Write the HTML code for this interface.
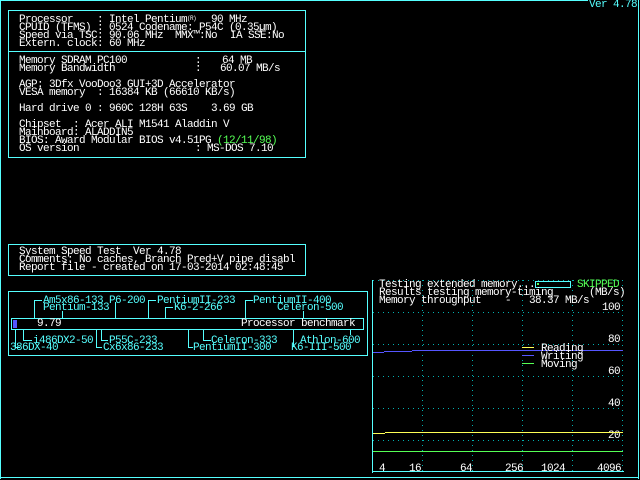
<!DOCTYPE html>
<html><head><meta charset="utf-8"><style>
html,body{margin:0;padding:0;background:#000;}
body{width:640px;height:480px;position:relative;overflow:hidden;font-family:"Liberation Mono",monospace;font-size:11px;letter-spacing:-0.6px;line-height:8px;color:#fff;}
.t{position:absolute;white-space:pre;margin-top:1px;}
.c{color:#55ffff}.g{color:#55ff55}
.b{position:absolute;border:1px solid #55ffff;}
.l{position:absolute;background:#55ffff;}
.hd{position:absolute;height:1px;background:repeating-linear-gradient(90deg,#00b0b0 0 1px,transparent 1px 5px);}
.vd{position:absolute;width:1px;background:repeating-linear-gradient(180deg,#00b0b0 0 1px,transparent 1px 5px);}
</style></head><body>
<div class="l" style="left:0;top:0;width:588px;height:1px"></div>
<div class="l" style="left:0;top:0;width:1px;height:479px"></div>
<div class="l" style="left:638px;top:0;width:1px;height:479px"></div>
<div class="l" style="left:0;top:477px;width:639px;height:1px"></div>
<div class="t c" style="left:589px;top:0">Ver 4.78</div>

<div class="b" style="left:8px;top:10px;width:296px;height:146px"></div>
<div class="l" style="left:8px;top:51px;width:297px;height:1px"></div>
<div class="t" style="left:19px;top:15px">Processor</div><div class="t" style="left:97px;top:15px">: Intel Pentium<sup style="font-size:6px;vertical-align:top;line-height:6px">(R)</sup></div><div class="t" style="left:211px;top:15px">90 MHz</div>
<div class="t" style="left:19px;top:23px">CPUID (TFMS)</div><div class="t" style="left:97px;top:23px">: 0524 Codename: P54C (0.35µm)</div>
<div class="t" style="left:19px;top:31px">Speed via TSC: 90.06 MHz</div><div class="t" style="left:175px;top:31px">MMX™:No</div><div class="t" style="left:230px;top:31px">IA SSE:No</div>
<div class="t" style="left:19px;top:39px">Extern. clock: 60 MHz</div>
<div class="t" style="left:19px;top:56px">Memory SDRAM PC100</div><div class="t" style="left:195px;top:56px">:</div><div class="t" style="left:222px;top:56px">64 MB</div>
<div class="t" style="left:19px;top:64px">Memory Bandwidth</div><div class="t" style="left:195px;top:64px">:</div><div class="t" style="left:220px;top:64px">60.07 MB/s</div>
<div class="t" style="left:19px;top:80px">AGP: 3Dfx VooDoo3 GUI+3D Accelerator</div>
<div class="t" style="left:19px;top:88px">VESA memory  : 16384 KB (66610 KB/s)</div>
<div class="t" style="left:19px;top:104px">Hard drive 0 : 960C 128H 63S</div><div class="t" style="left:211px;top:104px">3.69 GB</div>
<div class="t" style="left:19px;top:120px">Chipset  : Acer ALI M1541 Aladdin V</div>
<div class="t" style="left:19px;top:128px">Mainboard: ALADDIN5</div>
<div class="t" style="left:19px;top:136px">BIOS: Award Modular BIOS v4.51PG <span class="g">(12/11/98)</span></div>
<div class="t" style="left:19px;top:144px">OS version</div><div class="t" style="left:195px;top:144px">: MS-DOS 7.10</div>

<div class="b" style="left:8px;top:244px;width:296px;height:30px"></div>
<div class="t" style="left:19px;top:247px">System Speed Test  Ver 4.78</div>
<div class="t" style="left:19px;top:255px">Comments: No caches, Branch Pred+V pipe disabl</div>
<div class="t" style="left:19px;top:263px">Report file - created on 17-03-2014 02:48:45</div>

<div class="b" style="left:8px;top:291px;width:358px;height:63px"></div>
<div class="b" style="left:11px;top:318px;width:351px;height:10px"></div>
<div style="position:absolute;left:13px;top:320px;width:4px;height:8px;background:#5555ff"></div>
<div class="t" style="left:37px;top:319px">9.79</div>
<div class="t" style="left:241px;top:319px">Processor benchmark</div>
<div class="t c" style="left:43px;top:296px">Am5x86-133 P6-200</div>
<div class="t c" style="left:157px;top:296px">PentiumII-233</div>
<div class="t c" style="left:253px;top:296px">PentiumII-400</div>
<div class="t c" style="left:43px;top:303px">Pentium-133</div>
<div class="t c" style="left:174px;top:303px">K6-2-266</div>
<div class="t c" style="left:277px;top:303px">Celeron-500</div>
<div class="t c" style="left:33px;top:336px">i486DX2-50</div>
<div class="t c" style="left:109px;top:336px">P55C-233</div>
<div class="t c" style="left:211px;top:336px">Celeron-333</div>
<div class="t c" style="left:300px;top:336px">Athlon-600</div>
<div class="t c" style="left:10px;top:343px">386DX-40</div>
<div class="t c" style="left:103px;top:343px">Cx6x86-233</div>
<div class="t c" style="left:193px;top:343px">PentiumII-300</div>
<div class="t c" style="left:291px;top:343px">K6-III-500</div>
<div class="l" style="left:34px;top:300px;width:1px;height:18px"></div><div class="l" style="left:34px;top:300px;width:8px;height:1px"></div>
<div class="l" style="left:62px;top:311px;width:1px;height:7px"></div>
<div class="l" style="left:115px;top:302px;width:1px;height:16px"></div>
<div class="l" style="left:148px;top:300px;width:1px;height:18px"></div><div class="l" style="left:148px;top:300px;width:8px;height:1px"></div>
<div class="l" style="left:165px;top:307px;width:1px;height:11px"></div><div class="l" style="left:165px;top:307px;width:8px;height:1px"></div>
<div class="l" style="left:245px;top:300px;width:1px;height:18px"></div><div class="l" style="left:245px;top:300px;width:8px;height:1px"></div>
<div class="l" style="left:303px;top:311px;width:1px;height:7px"></div>
<div class="l" style="left:15px;top:329px;width:1px;height:18px"></div><div class="l" style="left:15px;top:347px;width:5px;height:1px"></div>
<div class="l" style="left:23px;top:329px;width:1px;height:11px"></div><div class="l" style="left:23px;top:340px;width:9px;height:1px"></div>
<div class="l" style="left:96px;top:329px;width:1px;height:18px"></div><div class="l" style="left:96px;top:347px;width:6px;height:1px"></div>
<div class="l" style="left:101px;top:329px;width:1px;height:11px"></div><div class="l" style="left:101px;top:340px;width:7px;height:1px"></div>
<div class="l" style="left:188px;top:329px;width:1px;height:18px"></div><div class="l" style="left:188px;top:347px;width:5px;height:1px"></div>
<div class="l" style="left:203px;top:329px;width:1px;height:11px"></div><div class="l" style="left:203px;top:340px;width:8px;height:1px"></div>
<div class="l" style="left:293px;top:329px;width:1px;height:18px"></div>
<div class="l" style="left:350px;top:329px;width:1px;height:6px"></div>

<div class="l" style="left:372px;top:280px;width:1px;height:193px"></div>
<div class="l" style="left:372px;top:471px;width:252px;height:1px"></div>
<div class="hd" style="left:373px;top:280px;width:250px"></div>
<div class="hd" style="left:373px;top:312px;width:250px"></div>
<div class="hd" style="left:373px;top:344px;width:250px"></div>
<div class="hd" style="left:373px;top:376px;width:250px"></div>
<div class="hd" style="left:373px;top:408px;width:250px"></div>
<div class="hd" style="left:373px;top:440px;width:250px"></div>
<div class="vd" style="left:422px;top:280px;height:191px"></div>
<div class="vd" style="left:472px;top:280px;height:191px"></div>
<div class="vd" style="left:522px;top:280px;height:191px"></div>
<div class="vd" style="left:572px;top:280px;height:191px"></div>
<div class="vd" style="left:622px;top:280px;height:191px"></div>
<div class="t" style="left:379px;top:280px">Testing extended memory...</div>
<div style="position:absolute;left:535px;top:281px;width:34px;height:5px;border:1px solid #55ffff;background:#000"></div>
<div style="position:absolute;left:537px;top:283px;width:2px;height:2px;background:#55ff55"></div>
<div class="t g" style="left:577px;top:280px">SKIPPED</div>
<div class="t" style="left:379px;top:288px">Results testing memory-timing</div>
<div class="t" style="left:589px;top:288px">(MB/s)</div>
<div class="t" style="left:379px;top:296px">Memory throughput    -   38.37 MB/s</div>
<div class="t" style="left:602px;top:303px">100</div>
<div class="t" style="left:608px;top:335px">80</div>
<div class="t" style="left:608px;top:367px">60</div>
<div class="t" style="left:608px;top:399px">40</div>
<div class="t" style="left:608px;top:431px">20</div>
<div style="position:absolute;left:373px;top:352px;width:11px;height:1px;background:#5555ff"></div>
<div style="position:absolute;left:384px;top:351px;width:28px;height:1px;background:#5555ff"></div>
<div style="position:absolute;left:412px;top:350px;width:211px;height:1px;background:#5555ff"></div>
<div style="position:absolute;left:373px;top:433px;width:12px;height:1px;background:#ffff55"></div>
<div style="position:absolute;left:385px;top:432px;width:238px;height:1px;background:#ffff55"></div>
<div style="position:absolute;left:373px;top:451px;width:250px;height:1px;background:#55ff55"></div>
<div style="position:absolute;left:522px;top:347px;width:12px;height:1px;background:#ffff55"></div>
<div style="position:absolute;left:522px;top:355px;width:12px;height:1px;background:#5555ff"></div>
<div style="position:absolute;left:522px;top:363px;width:12px;height:1px;background:#55ff55"></div>
<div class="t" style="left:541px;top:344px">Reading</div>
<div class="t" style="left:541px;top:352px">Writing</div>
<div class="t" style="left:541px;top:360px">Moving</div>
<div class="t" style="left:379px;top:464px">4</div>
<div class="t" style="left:409px;top:464px">16</div>
<div class="t" style="left:460px;top:464px">64</div>
<div class="t" style="left:505px;top:464px">256</div>
<div class="t" style="left:541px;top:464px">1024</div>
<div class="t" style="left:597px;top:464px">4096</div>
</body></html>
